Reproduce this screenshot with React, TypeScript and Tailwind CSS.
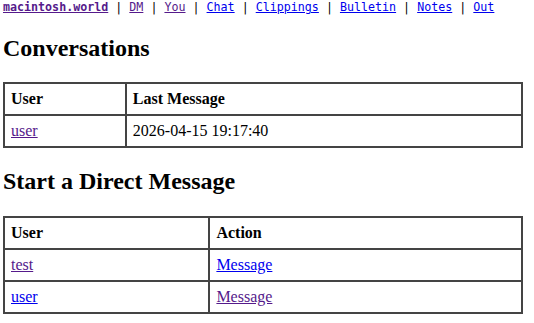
import React from "react";

const P = "text-[#551A8B] underline";
const B = "text-[#0000EE] underline";

const navLinks: { label: string; cls: string; bold?: boolean }[] = [
  { label: "macintosh.world", cls: P, bold: true },
  { label: "DM", cls: P },
  { label: "You", cls: P },
  { label: "Chat", cls: B },
  { label: "Clippings", cls: B },
  { label: "Bulletin", cls: B },
  { label: "Notes", cls: B },
  { label: "Out", cls: B },
];

const th = "border-2 border-[#444] px-[6px] py-[6px] text-left font-bold leading-[18px]";
const td = "border-2 border-[#444] px-[6px] py-[6px] leading-[18px]";

export default function App() {
  return (
    <div className="bg-white text-black w-[534px] h-[323px] overflow-hidden pl-[3px] pt-[1px] font-['Liberation_Serif',serif] text-[16px]">
      <div className="w-[520px]">
        <nav className="font-['DejaVu_Sans_Mono',monospace] text-[11.67px] leading-[13.6px] whitespace-pre">
          {navLinks.map((l, i) => (
            <React.Fragment key={l.label}>
              {i > 0 && " | "}
              <a href="#" className={`${l.cls} ${l.bold ? "font-bold" : ""}`}>{l.label}</a>
            </React.Fragment>
          ))}
        </nav>
        <h2 className="text-[24px] font-bold leading-[27.6px] mt-[20px] mb-[20px]">Conversations</h2>
        <table className="w-full border-collapse border-2 border-[#444]">
          <thead>
            <tr>
              <th className={th}>User</th>
              <th className={th}>Last Message</th>
            </tr>
          </thead>
          <tbody>
            <tr>
              <td className={td}><a href="#" className={P}>user</a></td>
              <td className={td}>2026-04-15 19:17:40</td>
            </tr>
          </tbody>
        </table>
        <h2 className="text-[24px] font-bold leading-[27.6px] mt-[20px] mb-[20px]">Start a Direct Message</h2>
        <table className="w-full border-collapse border-2 border-[#444]">
          <thead>
            <tr>
              <th className={th}>User</th>
              <th className={th}>Action</th>
            </tr>
          </thead>
          <tbody>
            <tr>
              <td className={td}><a href="#" className={P}>test</a></td>
              <td className={td}><a href="#" className={B}>Message</a></td>
            </tr>
            <tr>
              <td className={td}><a href="#" className={B}>user</a></td>
              <td className={td}><a href="#" className={P}>Message</a></td>
            </tr>
          </tbody>
        </table>
      </div>
    </div>
  );
}
